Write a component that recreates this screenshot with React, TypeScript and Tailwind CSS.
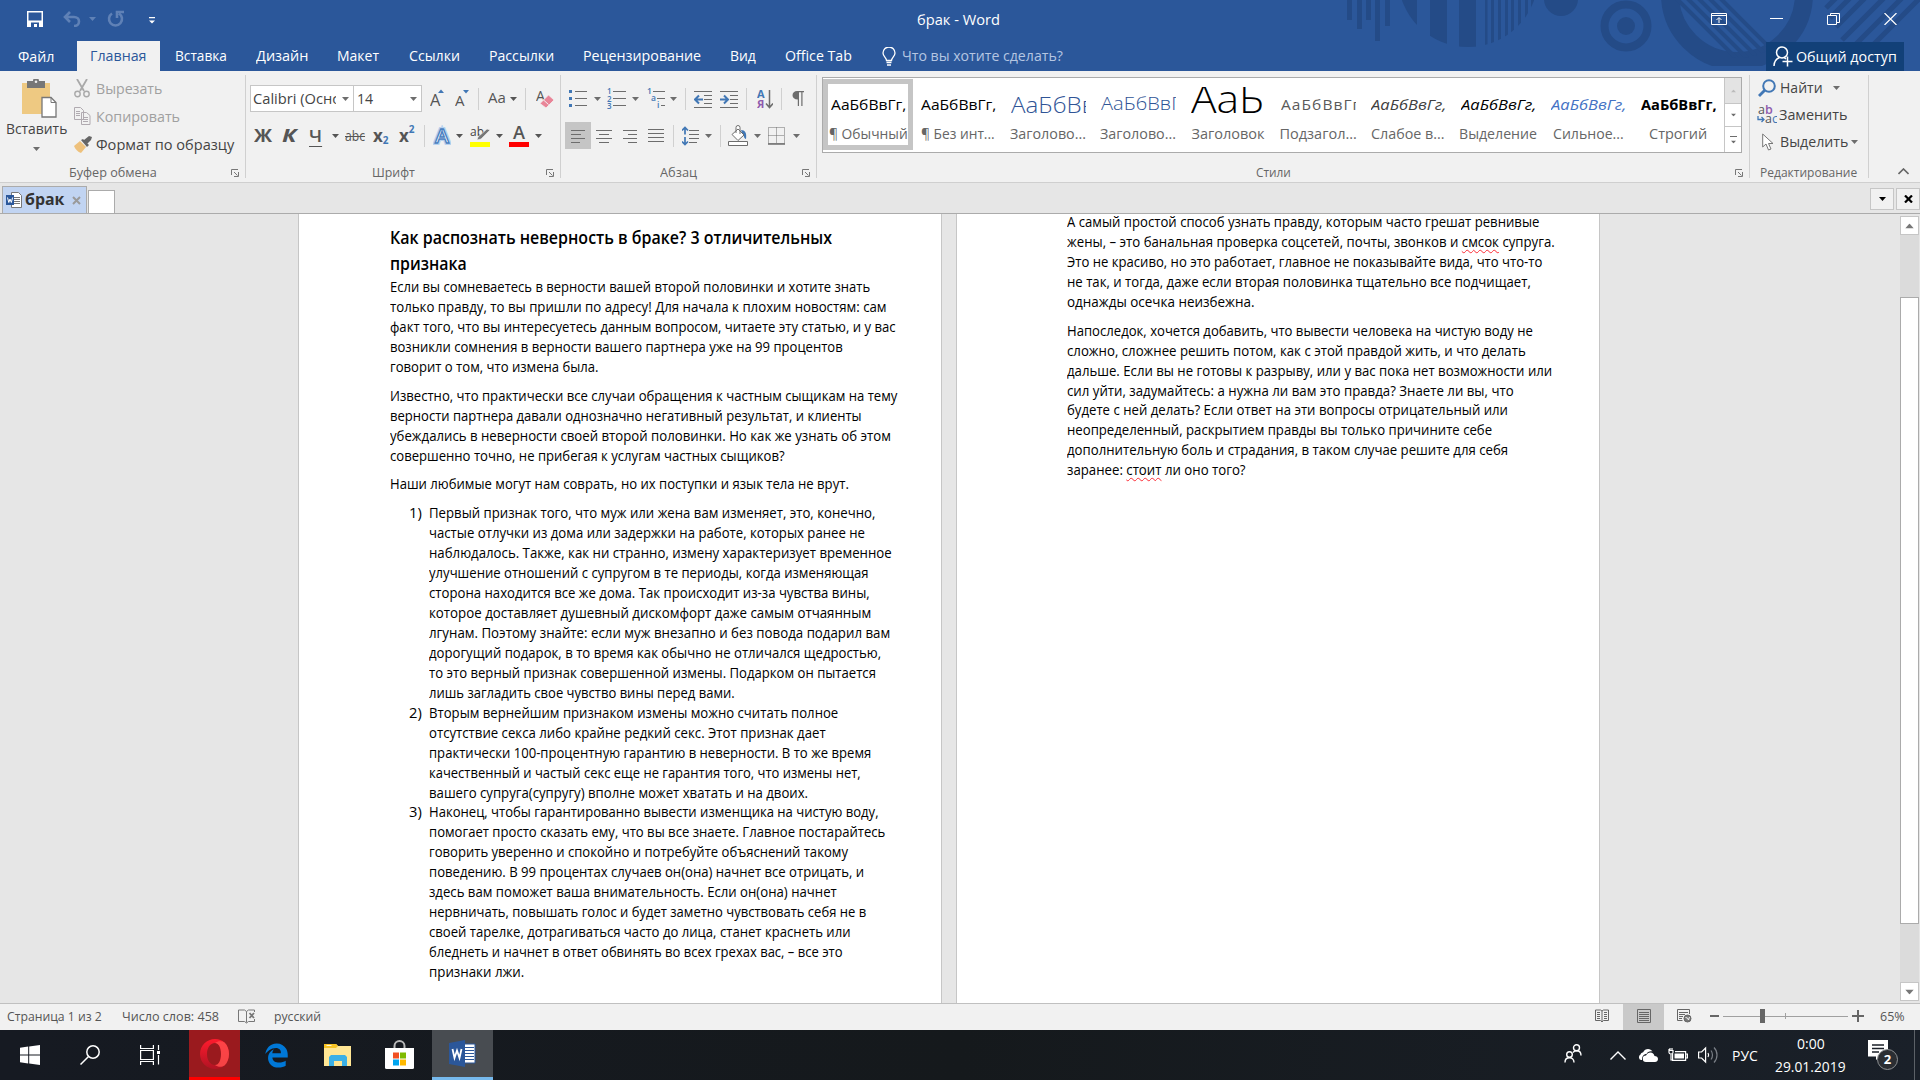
import { ReactNode, useLayoutEffect, useRef, useState } from 'react';
import { FaEdgeLegacy } from 'react-icons/fa';

type Line = [text: string, width: number, typo?: string];

const tabs: [string, number][] = [
  ['Вставка', 52],
  ['Дизайн', 52],
  ['Макет', 42],
  ['Ссылки', 51],
  ['Рассылки', 65],
  ['Рецензирование', 118],
  ['Вид', 26],
  ['Office Tab', 67],
];

const heading: Line[] = [
  ['Как распознать неверность в браке? 3 отличительных', 442],
  ['признака', 77],
];

const intro: Line[][] = [
  [
    ['Если вы сомневаетесь в верности вашей второй половинки и хотите знать', 480],
    ['только правду, то вы пришли по адресу! Для начала к плохим новостям: сам', 497],
    ['факт того, что вы интересуетесь данным вопросом, читаете эту статью, и у вас', 506],
    ['возникли сомнения в верности вашего партнера уже на 99 процентов', 453],
    ['говорит о том, что измена была.', 209],
  ],
  [
    ['Известно, что практически все случаи обращения к частным сыщикам на тему', 507],
    ['верности партнера давали однозначно негативный результат, и клиенты', 472],
    ['убеждались в неверности своей второй половинки. Но как же узнать об этом', 501],
    ['совершенно точно, не прибегая к услугам частных сыщиков?', 395],
  ],
  [['Наши любимые могут нам соврать, но их поступки и язык тела не врут.', 459]],
];

const list: Line[][] = [
  [
    ['Первый признак того, что муж или жена вам изменяет, это, конечно,', 446],
    ['частые отлучки из дома или задержки на работе, которых ранее не', 436],
    ['наблюдалось. Также, как ни странно, измену характеризует временное', 463],
    ['улучшение отношений с супругом в те периоды, когда изменяющая', 440],
    ['сторона находится все же дома. Так происходит из-за чувства вины,', 441],
    ['которое доставляет душевный дискомфорт даже самым отчаянным', 442],
    ['лгунам. Поэтому знайте: если муж внезапно и без повода подарил вам', 461],
    ['дорогущий подарок, в то время как обычно не отличался щедростью,', 452],
    ['то это верный признак совершенной измены. Подарком он пытается', 447],
    ['лишь загладить свое чувство вины перед вами.', 306],
  ],
  [
    ['Вторым вернейшим признаком измены можно считать полное', 409],
    ['отсутствие секса либо крайне редкий секс. Этот признак дает', 397],
    ['практически 100-процентную гарантию в неверности. В то же время', 442],
    ['качественный и частый секс еще не гарантия того, что измены нет,', 432],
    ['вашего супруга(супругу) вполне может хватать и на двоих.', 379],
  ],
  [
    ['Наконец, чтобы гарантированно вывести изменщика на чистую воду,', 450],
    ['помогает просто сказать ему, что вы все знаете. Главное постарайтесь', 456],
    ['говорить уверенно и спокойно и потребуйте объяснений такому', 419],
    ['поведению. В 99 процентах случаев он(она) начнет все отрицать, и', 435],
    ['здесь вам поможет ваша внимательность. Если он(она) начнет', 408],
    ['нервничать, повышать голос и будет заметно чувствовать себя не в', 437],
    ['своей тарелке, дотрагиваться часто до лица, станет краснеть или', 422],
    ['бледнеть и начнет в ответ обвинять во всех грехах вас, – все это', 414],
    ['признаки лжи.', 95],
  ],
];

const secondPage: Line[][] = [
  [
    ['А самый простой способ узнать правду, которым часто грешат ревнивые', 472],
    ['жены, – это банальная проверка соцсетей, почты, звонков и смсок супруга.', 488, 'смсок'],
    ['Это не красиво, но это работает, главное не показывайте вида, что что-то', 475],
    ['не так, и тогда, даже если вторая половинка тщательно все подчищает,', 464],
    ['однажды осечка неизбежна.', 187],
  ],
  [
    ['Напоследок, хочется добавить, что вывести человека на чистую воду не', 466],
    ['сложно, сложнее решить потом, как с этой правдой жить, и что делать', 459],
    ['дальше. Если вы не готовы к разрыву, или у вас пока нет возможности или', 485],
    ['сил уйти, задумайтесь: а нужна ли вам это правда? Знаете ли вы, что', 447],
    ['будете с ней делать? Если ответ на эти вопросы отрицательный или', 441],
    ['неопределенный, раскрытием правды вы только причините себе', 425],
    ['дополнительную боль и страдания, в таком случае решите для себя', 441],
    ['заранее: стоит ли оно того?', 179, 'стоит'],
  ],
];

const styles = [
  { name: '¶ Обычный', w: 79, cls: 'text-[15px] leading-[34px] text-black', sw: 75 },
  { name: '¶ Без инт...', w: 74, cls: 'text-[15px] leading-[34px] text-black', sw: 75 },
  { name: 'Заголово...', w: 76, cls: 'text-[22px] leading-[34px] font-light text-[#2f5496]', sw: 112 },
  { name: 'Заголово...', w: 76, cls: 'text-[19px] leading-[33px] font-light text-[#2f5496]', sw: 93 },
  { name: 'Заголовок', w: 73, cls: 'text-[39px] leading-[21px] font-light text-black', sw: 73, sample: 'АаБ' },
  { name: 'Подзагол...', w: 77, cls: 'text-[15px] leading-[34px] text-[#5a5a5a] tracking-[1px]', sw: 84 },
  { name: 'Слабое в...', w: 74, cls: 'text-[15px] leading-[34px] italic text-[#404040]', sw: 75 },
  { name: 'Выделение', w: 78, cls: 'text-[15px] leading-[34px] italic text-black', sw: 75 },
  { name: 'Сильное...', w: 71, cls: 'text-[15px] leading-[34px] italic text-[#4472c4]', sw: 75 },
  { name: 'Строгий', w: 58, cls: 'text-[15px] leading-[34px] font-bold text-black', sw: 76 },
];

// Text squeezed or stretched horizontally to a given width
function T({ w, className = '', children }: { w: number; className?: string; children: ReactNode }) {
  const ref = useRef<HTMLSpanElement>(null);
  const [scale, setScale] = useState(1);

  useLayoutEffect(() => {
    if (ref.current) setScale(w / ref.current.offsetWidth);
  }, [w]);

  return (
    <span className={`block shrink-0 whitespace-nowrap ${className}`} style={{ width: w }}>
      <span ref={ref} className="inline-block origin-left" style={{ transform: `scaleX(${scale})` }}>
        {children}
      </span>
    </span>
  );
}

function Arrow({ className = '' }: { className?: string }) {
  return (
    <svg className={`shrink-0 ${className}`} width="7" height="4" viewBox="0 0 7 4">
      <path d="M0 0h7L3.5 4z" fill="currentColor" />
    </svg>
  );
}

function Sep({ className = '' }: { className?: string }) {
  return <div className={`w-px h-[22px] shrink-0 bg-[#d0d0d0] ${className}`} />;
}

function Launcher() {
  return (
    <svg className="ml-auto mr-[7px]" width="8" height="8" viewBox="0 0 8 8" fill="none" stroke="#777">
      <path d="M.5 6V.5H7M3 3l3.5 3.5M7.5 3v4.5H3" />
    </svg>
  );
}

function GroupLabel({ w, className, launcher = true, children }: { w: number; className: string; launcher?: boolean; children: string }) {
  return (
    <div className="flex items-center h-[19px] mt-auto text-[13.5px] text-[#666]">
      <T w={w} className={className}>{children}</T>
      {launcher && <Launcher />}
    </div>
  );
}

function Rows({ rows, className = '', w = 18 }: { rows: [number, number, number][]; className?: string; w?: number }) {
  return (
    <svg className={`shrink-0 ${className}`} width={w} height="20" viewBox={`0 0 ${w} 20`} stroke="#6d6d6d">
      {rows.map(([x1, x2, y]) => (
        <path key={y} d={`M${x1} ${y + 0.5}H${x2}`} />
      ))}
    </svg>
  );
}

function HeaderArt() {
  return (
    <svg className="absolute left-[1340px] top-0" width="580" height="66" viewBox="1340 0 580 66" fill="#244b87">
      <defs>
        <clipPath id="disc"><circle cx="1468" cy="-23" r="70" /></clipPath>
        <clipPath id="bowl"><circle cx="1737" cy="-6" r="64" /></clipPath>
      </defs>
      <path d="M1347 0h5v20h-5zM1357 0h5v29h-5zM1366 0h5v20h-5zM1375 0h5v41h-5zM1385 0h5v26h-5z" />
      <g clipPath="url(#disc)">
        <path d="M1402 0h15v50h-15zM1430 0h17v50h-17zM1459 0h17v50h-17zM1485 0h2.500v50h-2.500zM1491 0h3v50h-3zM1498 0h3v50h-3zM1505 0h3v50h-3zM1511 0h3v50h-3zM1518 0h3v50h-3zM1525 0h3v50h-3zM1531 0h3v50h-3z" />
      </g>
      <circle cx="1561" cy="-1" r="17" />
      <circle cx="1626" cy="26" r="21.500" fill="none" stroke="#244b87" strokeWidth="8" />
      <circle cx="1626" cy="26" r="9" />
      <circle cx="1737" cy="-6" r="67" fill="none" stroke="#244b87" strokeWidth="18" />
      <g clipPath="url(#bowl)" stroke="#244b87" strokeWidth="4">
        <path d="M1672-6l80 80M1683-6l80 80M1694-6l80 80M1705-6l80 80M1716-6l80 80" />
      </g>
      <g stroke="#244b87" strokeWidth="5">
        <path d="M1826 8l10-10M1830 18l24-24M1836 27l34-34M1842 40l50-50M1850 50l56-56M1862 56l60-60" />
      </g>
    </svg>
  );
}

function TitleBar() {
  return (
    <div className="flex h-[41px] text-white">
      <div className="flex items-center w-[917px]">
        <svg className="ml-[27px] -mt-1" width="16" height="16" viewBox="0 0 16 16">
          <path d="M0 0h16v16H0z" fill="#fff" />
          <path d="M1.500 1.500h13v8h-13zM4 11.500h8V16h-2v-3H7v3H4z" fill="#2b579a" />
        </svg>
        <svg className="ml-5 -mt-1" width="18" height="16" viewBox="0 0 18 16" fill="none" stroke="#5f81b6" strokeWidth="2.600">
          <path d="M7 1L2 6l5 5M2 6h9c3 0 5 2 5 4.500S14 15 11 15" />
        </svg>
        <Arrow className="ml-2 -mt-1 text-[#5f81b6]" />
        <svg className="ml-[11px] -mt-1" width="18" height="17" viewBox="0 0 18 17" fill="none" stroke="#5f81b6" strokeWidth="2.600">
          <path d="M5 3.500a6.500 6.500 0 1 0 7 0M10 8V2h7" />
        </svg>
        <svg className="ml-[24px] -mt-px" width="6" height="7" viewBox="0 0 6 7" fill="#fff">
          <path d="M0 0h6v1.300H0zM0 3.500h6l-3 3z" />
        </svg>
      </div>
      <T w={83} className="text-[15px] leading-[39px]">брак - Word</T>
      <svg className="ml-[711px] mt-[13px]" width="16" height="12" viewBox="0 0 16 12" fill="none" stroke="#fff">
        <path d="M.5.5h15v11H.5zM.5 2.500h15M8 10V5M5.500 7L8 4.500 10.500 7" />
      </svg>
      <svg className="ml-[43px] mt-[13px]" width="13" height="12" viewBox="0 0 13 12" stroke="#fff"><path d="M0 5.500h13" /></svg>
      <svg className="ml-[44px] mt-[13px]" width="13" height="12" viewBox="0 0 13 12" fill="none" stroke="#fff">
        <path d="M.5 2.500h9v9h-9zM3.500 2.500v-2h9v9h-3" />
      </svg>
      <svg className="ml-[44px] mt-[13px]" width="13" height="12" viewBox="0 0 13 12" stroke="#fff" strokeWidth="1.200">
        <path d="M.5 0l12 12M12.500 0L.5 12" />
      </svg>
    </div>
  );
}

function TabBar() {
  return (
    <div className="flex items-center h-[30px] text-[15px] leading-[22px] text-white">
      <T w={36} className="ml-[18px]">Файл</T>
      <div className="flex items-center ml-[23px] w-[83px] h-[30px] bg-[#f1f1f1] text-[#2b579a]">
        <T w={56} className="ml-[13px] -mt-[2px]">Главная</T>
      </div>
      <div className="flex ml-[15px] gap-[29.2px] -mt-[2px]">
        {tabs.map(([name, w]) => <T key={name} w={w}>{name}</T>)}
      </div>
      <svg className="ml-[30px]" width="14" height="19" viewBox="0 0 14 19" fill="none" stroke="#fff" strokeWidth="1.300">
        <path d="M4.500 13.500c0-3-3.500-4-3.500-7.500a6 6 0 0 1 12 0c0 3.500-3.500 4.500-3.500 7.500zM4.500 15.500h5M5 18h4" />
      </svg>
      <T w={161} className="ml-[6px] -mt-[2px] text-[#b5c6e2]">Что вы хотите сделать?</T>
      <div className="flex items-center ml-auto mr-4 w-[138px] h-[29px] bg-[#124078]">
        <svg className="ml-[7px]" width="20" height="21" viewBox="0 0 20 21" fill="none" stroke="#fff" strokeWidth="1.500">
          <circle cx="9" cy="6.500" r="5.500" />
          <path d="M1 20c0-4 2-7 5.500-8.500M11 11.500l2 1.500M14.500 10.500v10M9.500 15.500h10" />
        </svg>
        <T w={101} className="ml-[3px]">Общий доступ</T>
      </div>
    </div>
  );
}

function ClipboardGroup() {
  return (
    <div className="flex flex-col w-[246px] h-full text-[15px]">
      <div className="flex">
        <div className="flex flex-col items-center w-[73px] pt-2 text-[#444]">
          <svg className="ml-[6px]" width="35" height="40" viewBox="0 0 35 40">
            <path d="M0 4h28v31H0z" fill="#eec982" />
            <path d="M5 2h6a3 3 0 0 1 6 0h6v7H5z" fill="#777" />
            <circle cx="14" cy="2.800" r="1.300" fill="#f1f1f1" />
            <path d="M20 18.500h9l5 5V38H20z" fill="#fff" stroke="#777" strokeWidth="1.300" />
            <path d="M29 18.500v5h5" fill="none" stroke="#777" />
          </svg>
          <T w={61} className="leading-[19px]">Вставить</T>
          <Arrow className="mt-[9px] text-[#6d6d6d]" />
        </div>
        <div className="flex flex-col ml-px pt-[3px]">
          <div className="flex items-center h-7 text-[#a0a0a0]">
            <svg className="mt-px" width="16" height="19" viewBox="0 0 16 19" fill="none" stroke="#a9a9a9" strokeWidth="1.800">
              <path d="M3 0l7 12M13 0L6 12" />
              <circle cx="3.500" cy="15" r="2.700" strokeWidth="1.400" />
              <circle cx="12.500" cy="15" r="2.700" strokeWidth="1.400" />
            </svg>
            <T w={66} className="ml-[6px]">Вырезать</T>
          </div>
          <div className="flex items-center h-7 text-[#a0a0a0]">
            <svg width="17" height="18" viewBox="0 0 17 18" fill="#f1f1f1" stroke="#b0aab0">
              <path d="M.5.5h6l3 3v9h-9zM7.500 5.500h5l3.500 3V17.500H7.500zM2 4.500h4M2 6.500h4M2 8.500h4M9 10.500h5M9 12.500h5M9 14.500h5" />
            </svg>
            <T w={84} className="ml-[5px]">Копировать</T>
          </div>
          <div className="flex items-center h-7 text-[#444]">
            <svg width="18" height="17" viewBox="0 0 18 17">
              <path d="M6 5l6 6-5 6c-3-1-6-4-7-7z" fill="#eec17c" />
              <path d="M7 4l2-1 6 6-2 2zM10 4l5-4 3 1-1 3-4 4z" fill="#666" />
            </svg>
            <T w={138} className="ml-[4px]">Формат по образцу</T>
          </div>
        </div>
      </div>
      <GroupLabel w={88} className="ml-[69px]">Буфер обмена</GroupLabel>
    </div>
  );
}

function FontGroup() {
  return (
    <div className="flex flex-col w-[315px] h-full pt-[14px] text-[#555]">
      <div className="flex items-center h-[27px] text-[15px]">
        <div className="flex items-center ml-1 w-[104px] h-[27px] border border-[#c6c6c6] bg-white text-[#444]">
          <div className="w-[85px] pl-[2px] overflow-hidden"><T w={86}>Calibri (Оснс</T></div>
          <Arrow className="ml-[6px] text-[#6d6d6d]" />
        </div>
        <div className="flex items-center w-[68px] h-[27px] border border-l-0 border-[#c6c6c6] bg-white text-[#444]">
          <T w={16} className="ml-[3px]">14</T>
          <Arrow className="ml-auto mr-1 text-[#6d6d6d]" />
        </div>
        <svg className="ml-[8px]" width="18" height="20" viewBox="0 0 18 20">
          <text x="0" y="16.500" fontSize="16.500" fontFamily="Open Sans" fill="#555">A</text>
          <path d="M8 4l3-3.500 3 3.500z" fill="#4177b5" />
        </svg>
        <svg className="ml-[7px]" width="18" height="20" viewBox="0 0 18 20">
          <text x="0" y="17" fontSize="15" fontFamily="Open Sans" fill="#555">A</text>
          <path d="M8 1l3 3.500 3-3.500z" fill="#4177b5" />
        </svg>
        <Sep className="ml-[5px]" />
        <T w={18} className="ml-[9px] -mt-[2px]">Aa</T>
        <Arrow className="ml-[4px]" />
        <Sep className="ml-[8px]" />
        <svg className="ml-[10px]" width="18" height="20" viewBox="0 0 18 20">
          <text x="0" y="11.500" fontSize="14" fontFamily="Open Sans" fill="#555">A</text>
          <path d="M12.500 6l5.500 5-8 8-6-4.500z" fill="#e98598" stroke="#f1f1f1" strokeWidth=".8" />
          <path d="M7 10.500l5.500 5" stroke="#f1f1f1" />
        </svg>
      </div>
      <div className="flex items-center mt-[10px] h-[27px] text-[17px]">
        <T w={18} className="ml-[8px] font-bold">Ж</T>
        <T w={14} className="ml-[10px] font-bold italic">К</T>
        <T w={13} className="ml-[13px] font-semibold">
          <span className="underline underline-offset-4 decoration-1">Ч</span>
        </T>
        <Arrow className="ml-[10px]" />
        <T w={20} className="ml-[6px] text-[14px]">
          <span className="line-through decoration-1">abc</span>
        </T>
        <div className="flex ml-[8px] w-4 font-bold">
          x<span className="text-[10px] leading-4 pt-[9px] text-[#4177b5]">2</span>
        </div>
        <div className="flex ml-[10px] w-4 font-bold">
          x<span className="text-[10px] leading-3 text-[#4177b5]">2</span>
        </div>
        <Sep className="ml-[9px]" />
        <svg className="ml-[8px]" width="18" height="22" viewBox="0 0 18 22">
          <text x="2" y="18" fontSize="20" fontFamily="Open Sans" fontWeight="600" textLength="14" lengthAdjust="spacingAndGlyphs" fill="#fff" stroke="#b8d2ee" strokeWidth="4">A</text>
          <text x="2" y="18" fontSize="20" fontFamily="Open Sans" fontWeight="600" textLength="14" lengthAdjust="spacingAndGlyphs" fill="#fff" stroke="#4a80c0" strokeWidth="1.300">A</text>
        </svg>
        <Arrow className="ml-[5px]" />
        <svg className="ml-[6px]" width="22" height="22" viewBox="0 0 22 22">
          <text x="1" y="11" fontSize="12" fontFamily="Open Sans" fill="#444">ab</text>
          <path d="M18 4l3 1-9 9-4 1 1-3z" fill="#777" stroke="#f1f1f1" strokeWidth=".6" />
          <path d="M1 17h20v5H1z" fill="#ff0" />
        </svg>
        <Arrow className="ml-[5px]" />
        <svg className="ml-[6px]" width="20" height="22" viewBox="0 0 20 22">
          <text x="4" y="14" fontSize="18" fontFamily="Open Sans" fontWeight="600" textLength="12" lengthAdjust="spacingAndGlyphs" fill="#555">A</text>
          <path d="M0 17h20v5H0z" fill="red" />
        </svg>
        <Arrow className="ml-[6px]" />
      </div>
      <GroupLabel w={43} className="ml-[126px]">Шрифт</GroupLabel>
    </div>
  );
}

function ParagraphGroup() {
  return (
    <div className="flex flex-col w-[256px] h-full pt-[14px] text-[#6d6d6d]">
      <div className="flex items-center h-[27px]">
        <svg className="ml-[8px] -mt-px" width="18" height="20" viewBox="0 0 18 20">
          <path d="M6 3.500h12M6 10.500h12M6 17.500h12" stroke="#6d6d6d" />
          <path d="M0 2h3v3H0zM0 9h3v3H0zM0 16h3v3H0z" fill="#4177b5" />
        </svg>
        <Arrow className="ml-[7px]" />
        <svg className="ml-[6px] -mt-px" width="19" height="22" viewBox="0 0 19 22" fontFamily="Open Sans" fontSize="8" fontWeight="600" fill="#4177b5">
          <path d="M6 4.500h13M6 11.500h13M6 18.500h13" stroke="#6d6d6d" />
          <text x="0" y="7">1</text><text x="0" y="14.500">2</text><text x="0" y="22">3</text>
        </svg>
        <Arrow className="ml-[6px]" />
        <svg className="ml-[8px] -mt-px" width="18" height="22" viewBox="0 0 18 22" fontFamily="Open Sans" fontSize="8.500" fontWeight="600" fill="#4177b5">
          <path d="M6 4.500h12M10 11.500h8M14 18.500h4" stroke="#6d6d6d" />
          <text x="0" y="7">1</text><text x="4" y="14">a</text><text x="10" y="21">i</text>
        </svg>
        <Arrow className="ml-[5px]" />
        <Sep className="ml-[8px]" />
        <svg className="ml-[8px]" width="18" height="18" viewBox="0 0 18 18" fill="none" stroke="#6d6d6d">
          <path d="M0 1.500h18M10 5.500h8M10 9.500h8M10 13.500h8M0 17.500h18" />
          <path d="M9 9.500H1.500M5 5.500l-4 4 4 4" stroke="#4177b5" strokeWidth="2" />
        </svg>
        <svg className="ml-[8px]" width="18" height="18" viewBox="0 0 18 18" fill="none" stroke="#6d6d6d">
          <path d="M0 1.500h18M10 5.500h8M10 9.500h8M10 13.500h8M0 17.500h18" />
          <path d="M0 9.500h7.500M4 5.500l4 4-4 4" stroke="#4177b5" strokeWidth="2" />
        </svg>
        <Sep className="ml-[8px]" />
        <svg className="ml-[10px]" width="16" height="20" viewBox="0 0 16 20" fontFamily="Open Sans" fontSize="11" fontWeight="700">
          <text x="0" y="9" fill="#4177b5">А</text>
          <text x="0" y="19" fill="#8e5bad">Я</text>
          <path d="M12.500 1v17M9 14.500l3.500 4 3.500-4" fill="none" stroke="#6d6d6d" strokeWidth="1.500" />
        </svg>
        <Sep className="ml-[8px]" />
        <svg className="ml-[10px]" width="12" height="15" viewBox="0 0 12 15">
          <path d="M5 0h7v1.200h-1.500V15H9.300V1.200H7V15H5.800V8.500C2.500 8.500.5 6.700.5 4.300S2.500 0 5 0z" fill="#6d6d6d" />
        </svg>
      </div>
      <div className="flex items-center mt-[10px] h-[27px]">
        <div className="flex items-center ml-1 w-[26px] h-[27px] bg-[#c5c5c5]">
          <Rows className="ml-[6px]" w={14} rows={[[0, 14, 4], [0, 10, 8], [0, 14, 12], [0, 9, 16]]} />
        </div>
        <Rows className="ml-[5px]" w={16} rows={[[0, 16, 4], [3, 13, 8], [0, 16, 12], [3, 13, 16]]} />
        <Rows className="ml-[11px]" w={14} rows={[[0, 14, 4], [5, 14, 8], [0, 14, 12], [5, 14, 16]]} />
        <Rows className="ml-[11px]" w={16} rows={[[0, 16, 3], [0, 16, 7], [0, 16, 11], [0, 16, 15]]} />
        <Sep className="ml-[9px]" />
        <svg className="ml-[8px]" width="17" height="20" viewBox="0 0 17 20" fill="none" stroke="#6d6d6d">
          <path d="M7 4.500h10M7 8.500h10M7 12.500h10M7 16.500h8" />
          <path d="M3 1.500v7M0 4.500l3-3 3 3M3 11v7.500M0 15.500l3 3 3-3" stroke="#4177b5" strokeWidth="1.700" />
        </svg>
        <Arrow className="ml-[6px]" />
        <Sep className="ml-[8px]" />
        <svg className="ml-[7px]" width="20" height="21" viewBox="0 0 20 21" fill="#fff" stroke="#6d6d6d">
          <path d="M13 5c4 0 6 3 5 9-2 0-2-4-4-6z" fill="#4177b5" stroke="none" />
          <path d="M10 4l6 6-6 5.500-6-6zM8 8V2.500a2 2 0 0 1 4 0V9" />
          <path d="M.5 16.500h19v4H.5z" />
        </svg>
        <Arrow className="ml-[6px]" />
        <svg className="ml-[7px]" width="17" height="18" viewBox="0 0 17 18" fill="none" stroke="#6d6d6d">
          <path d="M.5.5h16v16H.5zM8.500.5v16M.5 8.500h16" strokeDasharray="1 1" />
          <path d="M0 17h17" strokeWidth="1.500" />
        </svg>
        <Arrow className="ml-[8px]" />
      </div>
      <GroupLabel w={37} className="ml-[99px]">Абзац</GroupLabel>
    </div>
  );
}

function StylesGroup() {
  return (
    <div className="flex flex-col w-[933px] h-full pt-[6px]">
      <div className="flex ml-[5px] w-[920px] h-[76px] border border-[#ababab] bg-white">
        <div className="flex w-[902px]">
          {styles.map((s, i) => (
            <div
              key={i}
              className={
                i === 0
                  ? 'flex flex-col items-center w-[90px] h-[71px] mt-px border-[5px] border-[#c5c5c5] pt-[3px]'
                  : 'flex flex-col items-center w-[90px] h-[71px] mt-px pt-[8px]'
              }
            >
              <div className="w-[75px] h-[34px] shrink-0 overflow-hidden">
                <T w={s.sw} className={s.cls}>{s.sample ?? 'АаБбВвГг,'}</T>
              </div>
              <T w={s.w} className="mt-[3px] text-[14.5px] leading-5 text-[#666]">{s.name}</T>
            </div>
          ))}
        </div>
        <div className="flex flex-col w-[17px] border-l border-[#c6c6c6] text-[#6d6d6d]">
          <div className="flex items-center justify-center h-[25px] bg-[#e3e3e3]">
            <Arrow className="rotate-180 scale-75 text-[#bbb]" />
          </div>
          <div className="flex items-center justify-center h-[24px] border-y border-[#c6c6c6]"><Arrow className="scale-75" /></div>
          <div className="flex flex-col items-center justify-center gap-[3px] flex-1">
            <div className="w-[7px] h-px bg-[#6d6d6d]" />
            <Arrow className="scale-75" />
          </div>
        </div>
      </div>
      <GroupLabel w={35} className="ml-[439px]">Стили</GroupLabel>
    </div>
  );
}

function EditingGroup() {
  return (
    <div className="flex flex-col w-[119px] h-full pt-[3px] text-[15px] text-[#444]">
      <div className="flex items-center h-[27px]">
        <svg className="ml-[8px]" width="18" height="18" viewBox="0 0 18 18" fill="none" stroke="#4177b5">
          <circle cx="11" cy="7" r="5.800" strokeWidth="2" />
          <path d="M7 11l-6 6" strokeWidth="2.800" />
        </svg>
        <T w={43} className="ml-[4px]">Найти</T>
        <Arrow className="ml-[10px] text-[#6d6d6d]" />
      </div>
      <div className="flex items-center h-[27px]">
        <svg className="ml-[7px]" width="20" height="20" viewBox="0 0 20 20" fontFamily="Open Sans" fontSize="12.500">
          <text x="1" y="9" fill="#555">a<tspan fill="#8e5bad" fontWeight="600">b</tspan></text>
          <text x="8" y="18" fill="#555">a<tspan fill="#4177b5">c</tspan></text>
          <path d="M1 11v3.500h6M4.500 12l2.500 2.500L4.500 17" fill="none" stroke="#4177b5" strokeWidth="1.300" />
        </svg>
        <T w={68} className="ml-[2px]">Заменить</T>
      </div>
      <div className="flex items-center h-[27px]">
        <svg className="ml-[12px]" width="12" height="18" viewBox="0 0 12 18" fill="#fff" stroke="#777">
          <path d="M.7 1v13l3.300-3 2.500 6 2.500-1-2.500-5.500H11z" />
        </svg>
        <T w={68} className="ml-[6px]">Выделить</T>
        <Arrow className="ml-[3px] text-[#6d6d6d]" />
      </div>
      <GroupLabel w={97} className="ml-[10px]" launcher={false}>Редактирование</GroupLabel>
    </div>
  );
}

function Divider() {
  return <div className="w-px h-[103px] mt-1 -ml-px bg-[#d0d0d0]" />;
}

function Ribbon() {
  return (
    <div className="flex h-[112px] border-b border-[#cfcfcf] bg-[#f1f1f1]">
      <ClipboardGroup /><Divider />
      <FontGroup /><Divider />
      <ParagraphGroup /><Divider />
      <StylesGroup /><Divider />
      <EditingGroup /><Divider />
      <svg className="ml-auto mr-[11px] mt-[97px]" width="11" height="7" viewBox="0 0 11 7" fill="none" stroke="#666" strokeWidth="1.600">
        <path d="M.5 6l5-5 5 5" />
      </svg>
    </div>
  );
}

function DocumentTabs() {
  return (
    <div className="flex items-end h-[31px] border-b border-[#ababab] bg-[#e6e6e6]">
      <div className="flex items-center ml-[2px] w-[85px] h-[27px] border border-b-0 border-[#ababab] bg-[#c1d4f2]">
        <svg className="ml-[3px]" width="16" height="16" viewBox="0 0 16 16">
          <path d="M5.500.5h7l3 3v12h-10z" fill="#fff" stroke="#777" />
          <path d="M8 5.500h6M8 7.500h6M8 9.500h6M8 11.500h6" stroke="#777" />
          <path d="M0 3h8v10H0z" fill="#2b579a" />
          <path d="M1.500 5.500l1.300 5L4 7l1.300 3.500 1.300-5" fill="none" stroke="#fff" />
        </svg>
        <T w={39} className="ml-[3px] text-[15.5px] font-bold text-[#333]">брак</T>
        <svg className="ml-[8px]" width="9" height="9" viewBox="0 0 9 9" stroke="#9a9a9a" strokeWidth="2"><path d="M1 1l7 7M8 1L1 8" /></svg>
      </div>
      <div className="ml-px w-[27px] h-[23px] border border-b-0 border-[#ababab] bg-white" />
      <div className="flex gap-[2px] ml-auto mb-[3px]">
        <div className="flex items-center justify-center w-[24px] h-[22px] border border-[#c6c6c6] bg-[#f1f1f1]"><Arrow /></div>
        <div className="flex items-center justify-center w-[24px] h-[22px] border border-[#c6c6c6] bg-[#f1f1f1]">
          <svg width="9" height="8" viewBox="0 0 9 8" stroke="#000" strokeWidth="2.200"><path d="M1 .5l7 7M8 .5l-7 7" /></svg>
        </div>
      </div>
    </div>
  );
}

function DocLine({ line: [text, w, typo] }: { line: Line }) {
  if (!typo) return <T w={w}>{text}</T>;
  const [before, after] = text.split(typo);
  return (
    <T w={w}>
      {before}
      <span className="underline decoration-wavy decoration-red-500 decoration-1 underline-offset-2">{typo}</span>
      {after}
    </T>
  );
}

function Paragraph({ lines }: { lines: Line[] }) {
  return (
    <div>
      {lines.map((line) => <DocLine key={line[0]} line={line} />)}
    </div>
  );
}

function Workspace() {
  return (
    <div className="flex h-[789px] overflow-hidden bg-[#e6e6e6] text-[13.6px] leading-[19.94px] text-black">
      <div className="ml-[298px] w-[644px] border-x border-[#c6c6c6] bg-white pl-[91px] pt-[10px]">
        <div className="text-[17.5px] leading-[26px] font-semibold">
          <Paragraph lines={heading} />
        </div>
        <div className="flex flex-col gap-[9px] mt-px">
          {intro.map((lines, i) => <Paragraph key={i} lines={lines} />)}
          <div>
            {list.map((lines, i) => (
              <div key={i} className="flex pl-[19px]">
                <T w={13} className="mr-[7px]">{i + 1})</T>
                <Paragraph lines={lines} />
              </div>
            ))}
          </div>
        </div>
      </div>
      <div className="ml-[14px] w-[644px] border-x border-[#c6c6c6] bg-white pl-[110px]">
        <div className="flex flex-col gap-[9px] -mt-[2px]">
          {secondPage.map((lines, i) => <Paragraph key={i} lines={lines} />)}
        </div>
      </div>
      <div className="flex flex-col ml-auto mr-px mt-[2px] w-[19px] h-[785px] bg-[#dbdbdb] text-[#777]">
        <div className="flex items-center justify-center h-[19px] border border-[#c6c6c6] bg-white"><Arrow className="rotate-180 scale-125" /></div>
        <div className="mt-[62px] h-[627px] border border-[#ababab] bg-white" />
        <div className="flex items-center justify-center h-[19px] mt-auto border border-[#c6c6c6] bg-white"><Arrow className="scale-125" /></div>
      </div>
    </div>
  );
}

function StatusBar() {
  return (
    <div className="flex items-center h-[27px] pb-[2px] border-t border-[#c0c0c0] bg-[#f1f1f1] text-[13.5px] text-[#555]">
      <T w={95} className="ml-[7px]">Страница 1 из 2</T>
      <T w={97} className="ml-[20px]">Число слов: 458</T>
      <svg className="ml-[19px]" width="18" height="15" viewBox="0 0 18 15" fill="none" stroke="#777">
        <path d="M8.500 2.500l-2-1.500H.5v11.500h6l2 1.500 2-1.500h6V10M8.500 2.500v11M8.500 2.500l2-1.500h6v2" />
        <path d="M11.500 4l4.500 5M16 4l-4.500 5" strokeWidth="1.800" />
      </svg>
      <T w={47} className="ml-[18px]">русский</T>
      <svg className="ml-auto" width="14" height="14" viewBox="0 0 14 14" fill="none" stroke="#666">
        <path d="M7 2L5.500 1H.5v10.500h5L7 13l1.500-1.500h5V1h-5zM7 2v11M2 3.500h3M2 5.500h3M2 7.500h3M2 9.500h3M9 3.500h3M9 5.500h3M9 7.500h3M9 9.500h3" />
      </svg>
      <div className="flex items-center justify-center ml-[14px] -mb-[2px] w-[41px] h-[26px] pb-[2px] bg-[#c9c9c9]">
        <svg width="14" height="14" viewBox="0 0 14 14" fill="none" stroke="#666">
          <path d="M.5.5h13v13H.5zM2 3.500h10M2 5.500h10M2 7.500h10M2 9.500h10M2 11.500h10" />
        </svg>
      </div>
      <svg className="ml-[13px]" width="15" height="14" viewBox="0 0 15 14" fill="none" stroke="#666">
        <path d="M12.500 5V.5H.5v11h5M2 3.500h9M2 5.500h6M2 7.500h4M2 9.500h3" />
        <circle cx="10.500" cy="9.500" r="3.500" fill="#777" />
        <path d="M8.500 8.500l2 .5 1 2 1-3" stroke="#f1f1f1" />
      </svg>
      <div className="ml-[18px] w-[9px] h-[2px] bg-[#666]" />
      <div className="flex items-center ml-1 w-[125px] h-[14px]">
        <div className="w-[37px] h-px bg-[#a0a0a0]" />
        <div className="w-[5px] h-[14px] bg-[#666]" />
        <div className="w-[20px] h-px bg-[#a0a0a0]" />
        <div className="w-px h-[6px] bg-[#a0a0a0]" />
        <div className="flex-1 h-px bg-[#a0a0a0]" />
      </div>
      <svg className="ml-[4px]" width="12" height="12" viewBox="0 0 12 12" stroke="#666" strokeWidth="2"><path d="M0 6h12M6 0v12" /></svg>
      <T w={25} className="ml-[16px] mr-[15px]">65%</T>
    </div>
  );
}

function Taskbar() {
  return (
    <div className="flex items-center h-[50px] bg-linear-to-r from-[#161a22] via-[#15191c] to-[#1a2029] text-white">
      <svg className="ml-5" width="20" height="20" viewBox="0 0 20 20" fill="#fff">
        <path d="M0 2.800l8.200-1.200v7.900H0zM9.200 1.400L20 0v9.500H9.200zM0 10.500h8.200v7.900L0 17.200zM9.200 10.500H20V20L9.200 18.600z" />
      </svg>
      <svg className="ml-10" width="20" height="20" viewBox="0 0 20 20" fill="none" stroke="#fff" strokeWidth="1.500">
        <circle cx="13" cy="7" r="6.200" /><path d="M8.500 11.500l-8 8" />
      </svg>
      <svg className="ml-10" width="20" height="20" viewBox="0 0 20 20" fill="none" stroke="#fff" strokeWidth="1.200">
        <path d="M.6 5.500h12.800v9H.6zM.6 0v3.500h12.800V0M.6 20v-3.500h12.800V20M18.500 0v5M18.500 10v9.500" />
        <path d="M17 6h3v3h-3z" fill="#fff" stroke="none" />
      </svg>
      <div className="flex items-center justify-center ml-[29px] w-[51px] h-[50px] border-b-[3px] border-[#f00] bg-[#9a1a1e]">
        <svg width="29" height="30" viewBox="0 0 29 30">
          <defs>
            <linearGradient id="opera" x1="0" y1="0" x2="0" y2="1"><stop stopColor="#ff1b2d" /><stop offset="1" stopColor="#b01323" /></linearGradient>
          </defs>
          <path d="M15 0C7 0 0 6.500 0 15s7 15 15 15c4 0 7-1.300 9.500-3.500C27.500 23.500 29 19.500 29 15S27.500 6.500 24.500 3.500C22 1.300 19 0 15 0zm0 4c4 0 6 5 6 11s-2 11-6 11c-5 0-8-5-8-11S10 4 15 4z" fillRule="evenodd" fill="url(#opera)" />
          <path d="M15 4c2.500-2 6.500-2.500 9.500-.5 6 5.500 6 17.500 0 23C21.500 28.500 17.500 28 15 26c4 0 6-5 6-11S19 4 15 4z" fill="#ff4b4b" opacity=".85" />
        </svg>
      </div>
      <FaEdgeLegacy className="ml-6 w-[25px] h-[27px] text-[#0078d7]" />
      <svg className="ml-[35px]" width="28" height="24" viewBox="0 0 28 24">
        <path d="M0 1h12l2 2h13v20H0z" fill="#ffe694" />
        <path d="M0 1h12l2 2-2 2H0z" fill="#f7c324" />
        <path d="M2.500 2.500h5" stroke="#fff8d8" />
        <path d="M5 23v-9l2-2h14l2 2v9h-5v-5h-8v5z" fill="#3bb0e6" />
      </svg>
      <svg className="ml-[33px] -mt-px" width="29" height="30" viewBox="0 0 29 30">
        <path d="M9.500 8V6a5 5 0 0 1 10 0v2" fill="none" stroke="#b8b8b8" strokeWidth="2" />
        <path d="M0 8h29v19.500a1.500 1.500 0 0 1-1.500 1.500h-26A1.500 1.500 0 0 1 0 27.500z" fill="#fff" />
        <path d="M8 12.500h6v6H8z" fill="#f25022" />
        <path d="M15 12.500h6v6h-6z" fill="#7fba00" />
        <path d="M8 19.500h6v6H8z" fill="#00a4ef" />
        <path d="M15 19.500h6v6h-6z" fill="#ffb900" />
      </svg>
      <div className="flex items-center justify-center ml-[18px] w-[61px] h-[50px] border-b-[3px] border-[#76b9ed] bg-[#484c51]">
        <svg width="28" height="28" viewBox="0 0 28 28">
          <path d="M14 4h12v19H14z" fill="#fff" stroke="#2b579a" />
          <path d="M16 7.500h9M16 10.500h9M16 13.500h9M16 16.500h9M16 19.500h9" stroke="#2b579a" />
          <path d="M0 3l16-3v27L0 24z" fill="#2b579a" />
          <path d="M3.500 9l2 9L8 10.500l2.500 7.500 2-9" fill="none" stroke="#fff" strokeWidth="1.800" />
        </svg>
      </div>
      <svg className="ml-auto -mt-1" width="18" height="19" viewBox="0 0 18 19" fill="none" stroke="#fff" strokeWidth="1.400">
        <circle cx="12.500" cy="3.800" r="3" /><circle cx="5.500" cy="10.500" r="2.800" />
        <path d="M1 18.500c0-3 2-4.700 4.500-4.700S10 15.500 10 18.500M9 8.500c1-1.200 2-1.700 3.500-1.700 2.500 0 4.500 1.700 4.500 4.700" />
      </svg>
      <svg className="ml-[28px]" width="16" height="9" viewBox="0 0 16 9" fill="none" stroke="#fff" strokeWidth="1.400"><path d="M.5 8.500L8 1l7.500 7.500" /></svg>
      <svg className="ml-[12px]" width="20" height="13" viewBox="0 0 20 13" fill="#fff">
        <path d="M4 11H3a3 3 0 0 1-.5-5.500C3 4 4 3.500 5 3.500 6 1 8 0 10 0c2 0 3.500 1 4.500 2.500-3-.5-5 .5-6 2.500-3 0-4.500 2.500-4.500 6z" />
        <path d="M8 13a3.200 3.200 0 0 1 0-6.400C9 4.500 10.500 3.500 12.500 3.500S16 5 16.500 7c2 0 3.500 1.300 3.500 3s-1.500 3-3 3z" />
      </svg>
      <svg className="ml-[10px] -mt-px" width="20" height="14" viewBox="0 0 20 14" fill="none" stroke="#fff" strokeWidth="1.200">
        <path d="M4.600 6v6.400h13V3.600H7M17.600 6h1.800v4h-1.800M1 1v3.500c0 1 1 1.500 2 1.500s2-.5 2-1.500V2.500H1M2 0v2M4 0v2M3 6v6h2" />
        <path d="M6.500 5.500h9.500v5H6.500z" fill="#fff" stroke="none" />
      </svg>
      <svg className="ml-[10px]" width="20" height="18" viewBox="0 0 20 18" fill="none" stroke="#fff" strokeWidth="1.200">
        <path d="M.6 6v6h3l4 4V2l-4 4zM10 7c.8 1.200.8 2.800 0 4" />
        <path d="M13 4.500c2 2.500 2 6.500 0 9M16 1.500c4 4 4 11 0 15" stroke="#7a7f86" />
      </svg>
      <T w={26} className="ml-[14px] text-[15px]">РУС</T>
      <div className="flex flex-col items-center ml-[17px] text-[15px] leading-[23px]">
        <T w={28}>0:00</T>
        <T w={71}>29.01.2019</T>
      </div>
      <div className="relative ml-[22px] w-[30px] h-[30px]">
        <svg width="22" height="22" viewBox="0 0 22 22">
          <path d="M0 0h20v16.500h-8L8 20v-3.500H0z" fill="#fff" />
          <path d="M4 5h12M4 8.500h12M4 12h7" stroke="#1b2029" strokeWidth="1.300" />
        </svg>
        <div className="absolute left-[9px] top-[9px] w-[21px] h-[21px] rounded-full border border-[#8d9093] bg-[#2b2e33] text-center text-[13px] leading-[19px] font-bold">2</div>
      </div>
      <div className="ml-[16px] mr-[5px] w-px h-[50px] bg-[#5c6167]" />
    </div>
  );
}

export default function App() {
  return (
    <div className="w-[1920px] h-[1080px] overflow-hidden font-['Open_Sans','Noto_Sans',sans-serif] select-none">
      <div className="relative h-[71px] bg-[#2b579a]">
        <HeaderArt />
        <div className="relative">
          <TitleBar />
          <TabBar />
        </div>
      </div>
      <Ribbon />
      <DocumentTabs />
      <Workspace />
      <StatusBar />
      <Taskbar />
    </div>
  );
}
